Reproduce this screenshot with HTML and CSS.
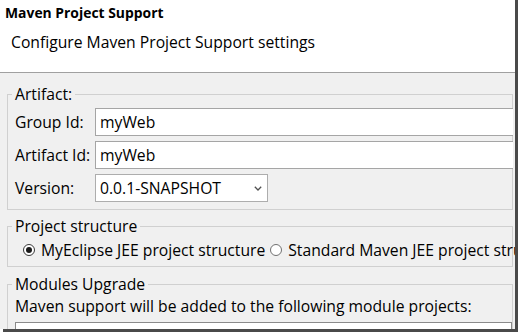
FILE: index.html
```html
<html>
<head>
  <title>Maven Project Support</title>
  <meta charset="UTF-8" />
  <link rel="stylesheet" href="styles.css">
</head>
<body>

  <div class="dialog">

    <div class="header">
      <div class="title">Maven Project Support</div>
      <div class="desc">Configure Maven Project Support settings</div>
    </div>

    <fieldset class="group">
      <legend>Artifact:</legend>
      <div class="fields">
        <label>Group Id:</label>
        <div class="textbox">myWeb</div>
        <label>Artifact Id:</label>
        <div class="textbox">myWeb</div>
        <label>Version:</label>
        <div class="combo">
          <span>0.0.1-SNAPSHOT</span>
          <svg width="8" height="5" viewBox="0 0 8 5"><polyline points="0.8,0.8 4,4 7.2,0.8" fill="none" stroke="#505050" stroke-width="1.3" /></svg>
        </div>
      </div>
    </fieldset>

    <fieldset class="group structure">
      <legend>Project structure</legend>
      <div class="radios">
        <span class="radio checked"></span>
        <span class="radio-label">MyEclipse JEE project structure</span>
        <span class="radio second"></span>
        <span class="radio-label">Standard Maven JEE project structure</span>
      </div>
    </fieldset>

    <fieldset class="group modules">
      <legend>Modules Upgrade</legend>
      <p>Maven support will be added to the following module projects:</p>
      <div class="listbox"></div>
    </fieldset>

  </div>

</body>
</html>
```

FILE: styles.css
```css
  body {
    margin: 0;
    background-color: #ffffff;
    overflow: hidden;
  }

  * {
    font-family: "Open Sans", "Noto Sans", sans-serif;
    color: #000000;
  }

  .dialog {
    width: 515px;
    height: 329px;
    overflow: hidden;
    background-color: #f0f0f0;
    box-shadow: 3px 0 0 #4a4a4a, 3px 3px 0 #4a4a4a;
    font-size: 15.7px;
    line-height: 20px;
    white-space: nowrap;
  }

  .header {
    height: 72px;
    background-color: #ffffff;
    border-bottom: 1px solid #a0a0a0;
  }

  .title {
    padding: 4px 0 0 5px;
    font-weight: bold;
    font-size: 13.9px;
    line-height: 18px;
  }

  .desc {
    margin-top: 10px;
    padding-left: 11px;
  }

  .group {
    margin: 11px 2px 0 7px;
    padding: 4px 0 7px 7px;
    border: 1px solid #d0d0d0;
    min-width: 0;
  }

  .group legend {
    padding: 0 3px;
    margin-left: -3px;
    line-height: 20px;
  }

  .fields {
    display: grid;
    grid-template-columns: 80px 1fr;
    row-gap: 5px;
    align-items: center;
  }

  .textbox, .combo {
    box-sizing: border-box;
    height: 28px;
    padding-left: 4px;
    background-color: #ffffff;
    border: 1px solid #a5a5a5;
    display: flex;
    align-items: center;
  }

  .textbox {
    border-right: none;
    margin-right: -1px;
  }

  .combo {
    width: 173px;
    justify-content: space-between;
    padding-right: 5px;
    border-color: #adadad;
  }

  .structure {
    margin-top: 6px;
    padding: 4px 0 6px 7px;
  }

  .radios {
    display: flex;
    align-items: center;
    height: 20px;
    margin-left: 8px;
  }

  .radio {
    box-sizing: border-box;
    width: 12px;
    height: 12px;
    border: 1px solid #707070;
    border-radius: 50%;
    background-color: #ffffff;
    display: flex;
    align-items: center;
    justify-content: center;
    flex: none;
  }

  .radio.checked {
    border-color: #3a3a3a;
  }

  .radio.checked::after {
    content: "";
    width: 6px;
    height: 6px;
    border-radius: 50%;
    background-color: #1a1a1a;
  }

  .radio-label {
    margin-left: 6px;
  }

  .radio.second {
    margin-left: 5px;
  }

  .modules {
    margin-top: 7px;
    padding: 2px 0 0 7px;
  }

  .modules p {
    margin: 0;
  }

  .listbox {
    margin-top: 6px;
    height: 40px;
    background-color: #ffffff;
    border: 1px solid #8a8a8a;
  }
```
